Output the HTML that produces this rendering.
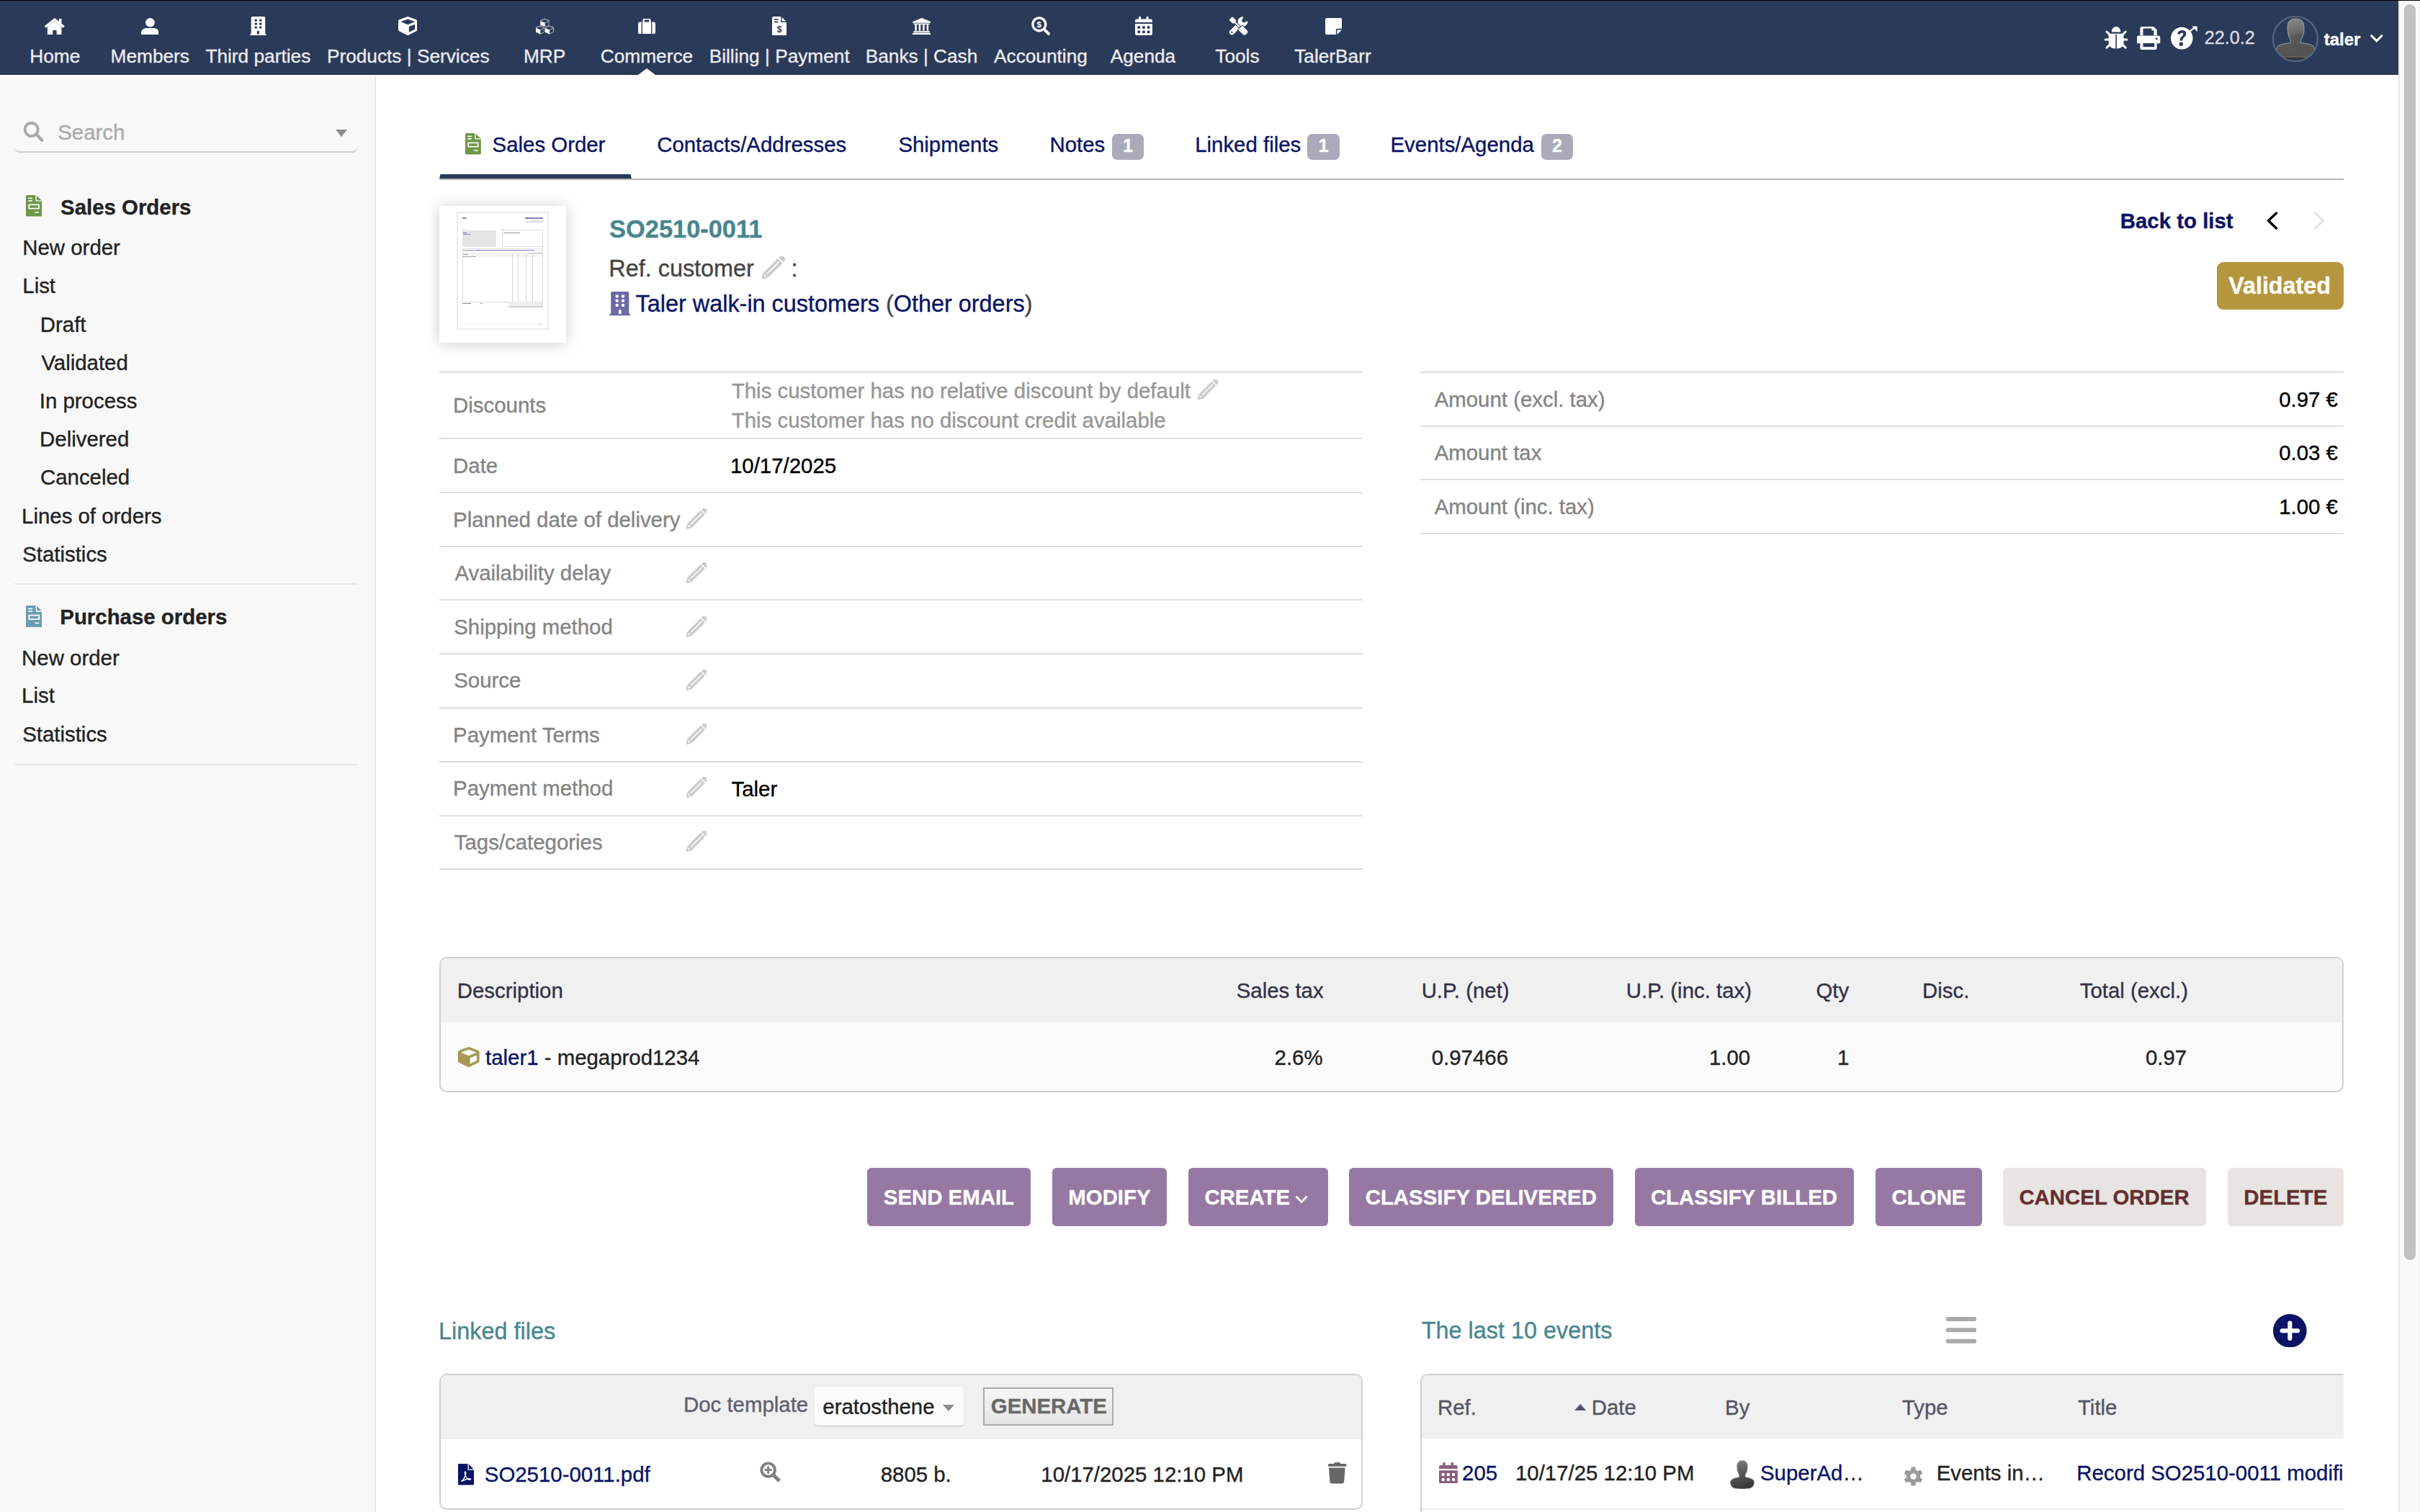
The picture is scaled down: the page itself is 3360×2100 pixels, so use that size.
<!DOCTYPE html>
<html><head><meta charset="utf-8"><title>SO2510-0011</title>
<style>
html,body{margin:0;padding:0;overflow:hidden;}
body{width:3360px;height:2100px;overflow:hidden;position:relative;background:#fff;font-family:"Liberation Sans",sans-serif;}
.t{position:absolute;white-space:nowrap;line-height:1;-webkit-text-stroke:0.35px currentColor;}
svg{display:block;}
</style></head><body>
<div style="position:absolute;left:0px;top:0px;width:3360px;height:1px;background:#000;"></div>
<div style="position:absolute;left:0px;top:1px;width:3330px;height:102px;background:#2b3a59;"></div>
<div style="position:absolute;left:0px;top:103px;width:3330px;height:1px;background:#1f2d4c;"></div>
<div class="t" style="top:65px;font-size:26.25px;color:#ececf0;left:41.3px;">Home</div>
<svg style="position:absolute;left:61.3px;top:24.6px;" width="29.2" height="23.7" viewBox="0 0 30 24" preserveAspectRatio="none"><path d="M1.8 12.6 L15.2 2.2 L28.6 12.6" fill="none" stroke="#fff" stroke-width="3.3" stroke-linejoin="miter"/><rect x="21.4" y="1" width="3.7" height="8" fill="#fff"/><path d="M5 12.2 L15.2 4.6 L25.1 12.2 V23.7 H18.1 V17.3 H12.6 V23.7 H5 Z" fill="#fff"/></svg>
<div class="t" style="top:65px;font-size:26.25px;color:#ececf0;left:153.6px;">Members</div>
<svg style="position:absolute;left:196.0px;top:24.6px;" width="24.4" height="23.7" viewBox="0 0 24 24" preserveAspectRatio="none"><circle cx="12.2" cy="6.4" r="6.3" fill="#fff"/><path d="M0 21.2 C0 16.8 3.6 14.2 7.6 14.2 H16.8 C20.8 14.2 24.4 16.8 24.4 21.2 V21.6 Q24.4 23.8 22.2 23.8 H2.2 Q0 23.8 0 21.6 Z" fill="#fff"/></svg>
<div class="t" style="top:65px;font-size:26.25px;color:#ececf0;left:285.4px;">Third parties</div>
<svg style="position:absolute;left:347.1px;top:23.0px;" width="22.9" height="26.4" viewBox="0 0 23 26.4" preserveAspectRatio="none"><path d="M0 26.4 V25.6 Q0 24.2 1.7 24 V1.6 Q1.7 0 3.3 0 H19.7 Q21.3 0 21.3 1.6 V24 Q22.9 24.2 22.9 25.6 V26.4 Z" fill="#fff"/><rect x="6.7" y="3.6" width="3.2" height="3.1" rx="0.9" fill="#2b3a59"/><rect x="6.7" y="8.55" width="3.2" height="3.1" rx="0.9" fill="#2b3a59"/><rect x="6.7" y="13.5" width="3.2" height="3.1" rx="0.9" fill="#2b3a59"/><rect x="13.2" y="3.6" width="3.2" height="3.1" rx="0.9" fill="#2b3a59"/><rect x="13.2" y="8.55" width="3.2" height="3.1" rx="0.9" fill="#2b3a59"/><rect x="13.2" y="13.5" width="3.2" height="3.1" rx="0.9" fill="#2b3a59"/><rect x="10.1" y="20" width="2.8" height="4.6" fill="#2b3a59"/></svg>
<div class="t" style="top:65px;font-size:26.25px;color:#ececf0;left:453.9px;">Products | Services</div>
<svg style="position:absolute;left:553.0px;top:23.0px;" width="26.4" height="26.2" viewBox="0 0 512 512" preserveAspectRatio="none"><path d="M239.1 6.3l-208 78c-18.7 7-31.1 24.9-31.1 44.9v225.1c0 18.2 10.3 34.8 26.5 42.9l208 104c13.5 6.8 29.4 6.8 42.9 0l208-104c16.3-8.1 26.5-24.8 26.5-42.9V129.3c0-20-12.4-37.9-31.1-44.9l-208-78C262 2.2 250 2.2 239.1 6.3zM256 68.4l192 72v1.1l-192 78-192-78v-1.1l192-72zm32 356V275.5l160-65v133.9l-160 80z" fill="#fff" fill-rule="evenodd"/></svg>
<div class="t" style="top:65px;font-size:26.25px;color:#ececf0;left:727.0px;">MRP</div>
<svg style="position:absolute;left:743.0px;top:25.0px;" width="26.7" height="23.0" viewBox="-0.5 -0.5 27.2 23.7" preserveAspectRatio="none"><g transform="translate(6.45 0.0) scale(0.02598)"><path d="M239.1 6.3l-208 78c-18.7 7-31.1 24.9-31.1 44.9v225.1c0 18.2 10.3 34.8 26.5 42.9l208 104c13.5 6.8 29.4 6.8 42.9 0l208-104c16.3-8.1 26.5-24.8 26.5-42.9V129.3c0-20-12.4-37.9-31.1-44.9l-208-78C262 2.2 250 2.2 239.1 6.3zM256 68.4l192 72v1.1l-192 78-192-78v-1.1l192-72zm32 356V275.5l160-65v133.9l-160 80z" fill="#fff" fill-rule="evenodd" stroke="#2b3a59" stroke-width="40"/></g><g transform="translate(0.0 10.0) scale(0.02598)"><path d="M239.1 6.3l-208 78c-18.7 7-31.1 24.9-31.1 44.9v225.1c0 18.2 10.3 34.8 26.5 42.9l208 104c13.5 6.8 29.4 6.8 42.9 0l208-104c16.3-8.1 26.5-24.8 26.5-42.9V129.3c0-20-12.4-37.9-31.1-44.9l-208-78C262 2.2 250 2.2 239.1 6.3zM256 68.4l192 72v1.1l-192 78-192-78v-1.1l192-72zm32 356V275.5l160-65v133.9l-160 80z" fill="#fff" fill-rule="evenodd" stroke="#2b3a59" stroke-width="40"/></g><g transform="translate(12.9 10.0) scale(0.02598)"><path d="M239.1 6.3l-208 78c-18.7 7-31.1 24.9-31.1 44.9v225.1c0 18.2 10.3 34.8 26.5 42.9l208 104c13.5 6.8 29.4 6.8 42.9 0l208-104c16.3-8.1 26.5-24.8 26.5-42.9V129.3c0-20-12.4-37.9-31.1-44.9l-208-78C262 2.2 250 2.2 239.1 6.3zM256 68.4l192 72v1.1l-192 78-192-78v-1.1l192-72zm32 356V275.5l160-65v133.9l-160 80z" fill="#fff" fill-rule="evenodd" stroke="#2b3a59" stroke-width="40"/></g></svg>
<div class="t" style="top:65px;font-size:26.25px;color:#ececf0;left:833.8px;">Commerce</div>
<svg style="position:absolute;left:886.0px;top:25.5px;" width="24.0" height="21.5" viewBox="0 0 24 22" preserveAspectRatio="none"><path d="M7.6 5 V2.2 Q7.6 0.4 9.4 0.4 H14.6 Q16.4 0.4 16.4 2.2 V5" fill="none" stroke="#fff" stroke-width="2.3"/><rect x="0" y="4.6" width="24" height="17.4" rx="3" fill="#fff"/><rect x="4.6" y="4.6" width="1.3" height="17.4" fill="#2b3a59"/><rect x="18.1" y="4.6" width="1.3" height="17.4" fill="#2b3a59"/></svg>
<div class="t" style="top:65px;font-size:26.25px;color:#ececf0;left:984.7px;">Billing | Payment</div>
<svg style="position:absolute;left:1072.0px;top:23.0px;" width="20.2" height="26.3" viewBox="0 0 20 26" preserveAspectRatio="none"><path d="M0 1.6 Q0 0 1.6 0 H12.6 L20 7.4 V24.4 Q20 26 18.4 26 H1.6 Q0 26 0 24.4 Z" fill="#fff"/><path d="M12.8 0 V7.2 H20" fill="none" stroke="#2b3a59" stroke-width="1.5"/><rect x="3" y="3.2" width="5.6" height="1.6" fill="#2b3a59"/><rect x="3" y="6.6" width="5.6" height="1.6" fill="#2b3a59"/><text x="10" y="22" font-family="Liberation Sans" font-weight="bold" font-size="12" text-anchor="middle" fill="#2b3a59">$</text></svg>
<div class="t" style="top:65px;font-size:26.25px;color:#ececf0;left:1201.7px;">Banks | Cash</div>
<svg style="position:absolute;left:1267.2px;top:25.0px;" width="25.2" height="23.0" viewBox="0 0 25 23.2" preserveAspectRatio="none"><path d="M12.5 0 L25 5.2 V6.8 H0 V5.2 Z" fill="#fff"/><rect x="1.5" y="7.6" width="22" height="1.6" fill="#fff"/><rect x="3.2" y="9.2" width="2.6" height="8.6" fill="#fff"/><rect x="8.6" y="9.2" width="2.6" height="8.6" fill="#fff"/><rect x="14.0" y="9.2" width="2.6" height="8.6" fill="#fff"/><rect x="19.4" y="9.2" width="2.6" height="8.6" fill="#fff"/><rect x="1.5" y="18.4" width="22" height="2" fill="#fff"/><rect x="0" y="21" width="25" height="2.2" fill="#fff"/></svg>
<div class="t" style="top:65px;font-size:26.25px;color:#ececf0;left:1380.0px;">Accounting</div>
<svg style="position:absolute;left:1432.3px;top:23.0px;" width="26.1" height="26.0" viewBox="0 0 26 26" preserveAspectRatio="none"><circle cx="10.8" cy="10.8" r="8.9" fill="none" stroke="#fff" stroke-width="3.4"/><path d="M17.6 17.6 L23.8 23.8" stroke="#fff" stroke-width="4" stroke-linecap="round"/><text x="10.8" y="15" font-family="Liberation Sans" font-weight="bold" font-size="11.5" text-anchor="middle" fill="#fff">$</text></svg>
<div class="t" style="top:65px;font-size:26.25px;color:#ececf0;left:1541.7px;">Agenda</div>
<svg style="position:absolute;left:1575.5px;top:23.0px;" width="24.0" height="26.0" viewBox="0 0 26 29.4" preserveAspectRatio="none"><rect x="5.4" y="0" width="3.4" height="5" rx="1" fill="#fff"/><rect x="16.8" y="0" width="3.4" height="5" rx="1" fill="#fff"/><path d="M0 6.4 Q0 3.9 2.5 3.9 H23.5 Q26 3.9 26 6.4 V9 H0 Z" fill="#fff"/><path d="M0 11.2 H26 V26.9 Q26 29.4 23.5 29.4 H2.5 Q0 29.4 0 26.9 Z" fill="#fff"/><rect x="3.70" y="14.90" width="4" height="4" rx="0.6" fill="#2b3a59"/><rect x="3.70" y="22.10" width="4" height="4" rx="0.6" fill="#2b3a59"/><rect x="10.95" y="14.90" width="4" height="4" rx="0.6" fill="#2b3a59"/><rect x="10.95" y="22.10" width="4" height="4" rx="0.6" fill="#2b3a59"/><rect x="18.20" y="14.90" width="4" height="4" rx="0.6" fill="#2b3a59"/><rect x="18.20" y="22.10" width="4" height="4" rx="0.6" fill="#2b3a59"/></svg>
<div class="t" style="top:65px;font-size:26.25px;color:#ececf0;left:1687.3px;">Tools</div>
<svg style="position:absolute;left:1706.3px;top:23.0px;" width="26.9" height="26.0" viewBox="0 0 26.8 26.3" preserveAspectRatio="none"><g transform="translate(13.4 13.15) rotate(-45) scale(0.87)"><path d="M-14.4 -4.2 H4 V4.2 H-14.4 A4.2 4.2 0 0 1 -14.4 -4.2 Z" fill="#fff"/><path d="M3 -4.4 A8 8 0 1 1 3 4.4 Z" fill="#fff"/><path d="M9.6 -2.9 L12 -2.9 L19 -6.5 V6.5 L12 2.9 H9.6 Z" fill="#2b3a59"/><circle cx="-14.6" cy="0" r="1.3" fill="#2b3a59"/></g><g transform="translate(13.4 13.15) rotate(45) scale(0.87)"><path d="M-18 -3 L-16.6 -4.4 H-8.6 L-7.4 -1.8 H3 V1.8 H-7.4 L-8.6 4.4 H-16.6 L-18 3 Z" fill="#fff" stroke="#2b3a59" stroke-width="1.1"/><path d="M3.4 -5.2 H14.6 A4.2 4.2 0 0 1 18.8 -1 V1 A4.2 4.2 0 0 1 14.6 5.2 H3.4 Z" fill="#fff" stroke="#2b3a59" stroke-width="1.1"/></g></svg>
<div class="t" style="top:65px;font-size:26.25px;color:#ececf0;left:1797.2px;">TalerBarr</div>
<svg style="position:absolute;left:1840.2px;top:25.0px;" width="23.1" height="23.0" viewBox="0 0 23 23" preserveAspectRatio="none"><path d="M0 2 Q0 0 2 0 H21 Q23 0 23 2 V14.8 H16.8 Q14.8 14.8 14.8 16.8 V23 H2 Q0 23 0 21 Z" fill="#fff"/><path d="M16.4 16.4 H23 L16.4 23 Z" fill="#fff"/></svg>
<svg style="position:absolute;left:886px;top:95px;" width="24" height="9" viewBox="0 0 24 9" preserveAspectRatio="none"><path d="M0 9 L12 0 L24 9 Z" fill="#fff"/></svg>
<svg style="position:absolute;left:2921.5px;top:37px;" width="32.2" height="32.2" viewBox="0 0 32 32" preserveAspectRatio="none"><path d="M9.6 7.5 Q10.2 0 16 0 Q21.8 0 22.4 7.5 Z" fill="#fff"/><path d="M5.6 9.6 H26.4 V22 Q26.4 29.8 16.8 30.4 V10.8 H15.2 V30.4 Q5.6 29.8 5.6 22 Z" fill="#fff"/><path d="M3 7 L8 12 M29 7 L24 12 M1 18 H7 M31 18 H25 M3 29 L8 24 M29 29 L24 24" stroke="#fff" stroke-width="3" stroke-linecap="round"/></svg>
<svg style="position:absolute;left:2967.3px;top:37px;" width="32.3" height="32.2" viewBox="0 0 32 32" preserveAspectRatio="none"><path d="M4.4 12 V2.4 Q4.4 0 6.8 0 H23 L27.4 4.4 V12 H23.2 V5.2 L20.2 5.2 V2.4 H8.4 V12 Z" fill="#fff"/><path d="M2.6 12.4 H29.4 Q32 12.4 32 15 V23.2 H27.4 V29.6 Q27.4 32 25 32 H6.8 Q4.4 32 4.4 29.6 V23.2 H0 V15 Q0 12.4 2.6 12.4 Z" fill="#fff"/><rect x="8.4" y="22.8" width="15.6" height="5.2" fill="#2b3a59"/><circle cx="27" cy="16.8" r="1.4" fill="#2b3a59"/></svg>
<svg style="position:absolute;left:3013.8px;top:36.4px;" width="37.2" height="32.6" viewBox="0 0 38 33" preserveAspectRatio="none"><circle cx="15.6" cy="17.4" r="15.6" fill="#fff"/><path d="M25 9 L34.5 1.8" stroke="#fff" stroke-width="2.2"/><path d="M29.8 0.6 H37.6 V8.2 Z" fill="#fff"/><g transform="translate(15.6 17.4) scale(1.16) translate(-15.6 -17.4)"><path d="M10 11.6 Q11.8 7.6 16 7.6 Q21 7.6 21 12 Q21 14.6 18.2 16.4 Q16.6 17.6 16.4 20.4 H13.2 Q13.2 16.8 15.6 15 Q17.4 13.8 17.4 12.3 Q17.4 10.8 15.8 10.8 Q14.2 10.8 13 12.8 Z" fill="#2b3a59"/><circle cx="14.8" cy="24.4" r="2.4" fill="#2b3a59"/></g></svg>
<div class="t" style="top:40px;font-size:25.2px;color:#dcdce2;left:3060.7px;">22.0.2</div>
<svg style="position:absolute;left:3155px;top:21.7px;" width="64" height="64.0" viewBox="0 0 64 64" preserveAspectRatio="none"><defs><linearGradient id="avg" x1="0" y1="0" x2="0.25" y2="1"><stop offset="0" stop-color="#8c8c8c"/><stop offset="0.45" stop-color="#6c6c6c"/><stop offset="0.55" stop-color="#585858"/><stop offset="1" stop-color="#535353"/></linearGradient><clipPath id="avc"><circle cx="32" cy="32" r="30.6"/></clipPath></defs><g clip-path="url(#avc)"><path d="M21 15.5 Q21 4 32.5 4 Q44 4 44 15.5 V21.5 Q43.4 28.5 39.6 33.5 V37.4 Q54 39.2 57 42.4 Q59.6 45.4 59.6 57.4 H5 Q5 45.4 7.6 42.4 Q10.6 39.2 25.4 37.4 V33.5 Q21.6 28.5 21.4 21.5 Z" fill="url(#avg)" stroke="#a8a8a8" stroke-width="1"/><rect x="5" y="57.4" width="55" height="2.6" fill="#333"/></g><circle cx="32" cy="32" r="31" fill="none" stroke="#56657f" stroke-width="2.2"/></svg>
<div class="t" style="top:43px;font-size:24px;color:#fff;font-weight:bold;left:3226.7px;">taler</div>
<svg style="position:absolute;left:3289.5px;top:47px;" width="19.5" height="14" viewBox="0 0 19.5 14" preserveAspectRatio="none"><path d="M1.8 1.8 L9.75 9.9 L17.7 1.8" fill="none" stroke="#fff" stroke-width="3"/></svg>
<div style="position:absolute;left:3330px;top:1px;width:30px;height:2099px;background:#fafafa;"></div>
<div style="position:absolute;left:3330px;top:1px;width:1.5px;height:2099px;background:#e8e8e8;"></div>
<div style="position:absolute;left:3338px;top:6px;width:16px;height:1744px;background:#c1c1c1;border-radius:8px;"></div>
<div style="position:absolute;left:3358.6px;top:1px;width:1.4px;height:2099px;background:#efefef;"></div>
<div style="position:absolute;left:0px;top:105px;width:520px;height:1995px;background:#f8f8f8;"></div>
<div style="position:absolute;left:520px;top:105px;width:2px;height:1995px;background:#e6e6e6;"></div>
<svg style="position:absolute;left:32.3px;top:168.4px;" width="28.7" height="29.1" viewBox="0 0 30 30" preserveAspectRatio="none"><circle cx="12.2" cy="12.2" r="9.4" fill="none" stroke="#aaa" stroke-width="4"/><path d="M19.6 19.6 L27.4 27.4" stroke="#aaa" stroke-width="4.6" stroke-linecap="round"/></svg>
<div class="t" style="top:169px;font-size:29.4px;color:#aaa;left:80.2px;">Search</div>
<svg style="position:absolute;left:466px;top:180px;" width="16" height="10" viewBox="0 0 16 10" preserveAspectRatio="none"><path d="M0 0 H16 L8 10 Z" fill="#8c8c8c"/></svg>
<div style="position:absolute;left:20px;top:150px;width:476px;height:62px;border-bottom:2px solid #cecece;border-radius:0 0 7px 7px;box-sizing:border-box;"></div>
<svg style="position:absolute;left:35.9px;top:271.3px;" width="22.2" height="29.4" viewBox="0 0 22 30" preserveAspectRatio="none"><path d="M0 1.4 Q0 0 1.4 0 H14 L22 8 V28.6 Q22 30 20.6 30 H1.4 Q0 30 0 28.6 Z" fill="#6f9649"/><path d="M14 0 V8 H22" fill="none" stroke="#fff" stroke-width="1.4"/><rect x="3" y="3.6" width="6" height="1.6" fill="#fff"/><rect x="3" y="7.2" width="6" height="1.6" fill="#fff"/><rect x="4.2" y="13.6" width="13.6" height="5.4" fill="none" stroke="#fff" stroke-width="1.7"/><rect x="12.2" y="23.6" width="5.6" height="1.6" fill="#fff"/></svg>
<div class="t" style="top:273px;font-size:29.4px;color:#222;font-weight:bold;left:84.1px;">Sales Orders</div>
<div class="t" style="top:329px;font-size:29.4px;color:#222;left:31.3px;">New order</div>
<div class="t" style="top:382px;font-size:29.4px;color:#222;left:31.3px;">List</div>
<div class="t" style="top:436px;font-size:29.4px;color:#222;left:55.8px;">Draft</div>
<div class="t" style="top:489px;font-size:29.4px;color:#222;left:57.4px;">Validated</div>
<div class="t" style="top:542px;font-size:29.4px;color:#222;left:54.8px;">In process</div>
<div class="t" style="top:595px;font-size:29.4px;color:#222;left:55.1px;">Delivered</div>
<div class="t" style="top:648px;font-size:29.4px;color:#222;left:56.0px;">Canceled</div>
<div class="t" style="top:702px;font-size:29.4px;color:#222;left:30.1px;">Lines of orders</div>
<div class="t" style="top:755px;font-size:29.4px;color:#222;left:31.2px;">Statistics</div>
<div style="position:absolute;left:20px;top:810px;width:476px;height:2px;background:#e8e8e8;"></div>
<svg style="position:absolute;left:35.7px;top:841px;" width="22.6" height="30" viewBox="0 0 22 30" preserveAspectRatio="none"><path d="M0 1.4 Q0 0 1.4 0 H14 L22 8 V28.6 Q22 30 20.6 30 H1.4 Q0 30 0 28.6 Z" fill="#6d9db0"/><path d="M14 0 V8 H22" fill="none" stroke="#fff" stroke-width="1.4"/><rect x="3" y="3.6" width="6" height="1.6" fill="#fff"/><rect x="3" y="7.2" width="6" height="1.6" fill="#fff"/><rect x="4.2" y="13.6" width="13.6" height="5.4" fill="none" stroke="#fff" stroke-width="1.7"/><rect x="12.2" y="23.6" width="5.6" height="1.6" fill="#fff"/></svg>
<div class="t" style="top:842px;font-size:29.4px;color:#222;font-weight:bold;left:83.3px;">Purchase orders</div>
<div class="t" style="top:899px;font-size:29.4px;color:#222;left:30.1px;">New order</div>
<div class="t" style="top:951px;font-size:29.4px;color:#222;left:30.1px;">List</div>
<div class="t" style="top:1005px;font-size:29.4px;color:#222;left:31.2px;">Statistics</div>
<div style="position:absolute;left:20px;top:1061px;width:476px;height:2px;background:#e8e8e8;"></div>
<svg style="position:absolute;left:646.1px;top:185.1px;" width="21.8" height="29.5" viewBox="0 0 22 30" preserveAspectRatio="none"><path d="M0 1.4 Q0 0 1.4 0 H14 L22 8 V28.6 Q22 30 20.6 30 H1.4 Q0 30 0 28.6 Z" fill="#6f9649"/><path d="M14 0 V8 H22" fill="none" stroke="#fff" stroke-width="1.4"/><rect x="3" y="3.6" width="6" height="1.6" fill="#fff"/><rect x="3" y="7.2" width="6" height="1.6" fill="#fff"/><rect x="4.2" y="13.6" width="13.6" height="5.4" fill="none" stroke="#fff" stroke-width="1.7"/><rect x="12.2" y="23.6" width="5.6" height="1.6" fill="#fff"/></svg>
<div class="t" style="top:186px;font-size:29.4px;color:#0a1464;left:683.6px;">Sales Order</div>
<div class="t" style="top:186px;font-size:29.4px;color:#0a1464;left:912.2px;">Contacts/Addresses</div>
<div class="t" style="top:186px;font-size:29.4px;color:#0a1464;left:1247.4px;">Shipments</div>
<div class="t" style="top:186px;font-size:29.4px;color:#0a1464;left:1457.5px;">Notes</div>
<div class="t" style="top:186px;font-size:29.4px;color:#0a1464;left:1659.2px;">Linked files</div>
<div class="t" style="top:186px;font-size:29.4px;color:#0a1464;left:1930.5px;">Events/Agenda</div>
<div style="position:absolute;left:1544.3px;top:186px;width:43.4px;height:35.6px;background:#aaaaba;border-radius:7px;"></div>
<div class="t" style="top:190px;font-size:25.2px;color:#fff;font-weight:bold;left:1559.0px;">1</div>
<div style="position:absolute;left:1815.2px;top:186px;width:44.5px;height:35.6px;background:#aaaaba;border-radius:7px;"></div>
<div class="t" style="top:190px;font-size:25.2px;color:#fff;font-weight:bold;left:1830.4px;">1</div>
<div style="position:absolute;left:2140.3px;top:186px;width:43.4px;height:35.6px;background:#aaaaba;border-radius:7px;"></div>
<div class="t" style="top:190px;font-size:25.2px;color:#fff;font-weight:bold;left:2155.0px;">2</div>
<svg style="position:absolute;left:610px;top:241.5px;" width="267" height="6.5" viewBox="0 0 267 6.5" preserveAspectRatio="none"><path d="M1.5 0 H265.5 L267 6.5 H0 Z" fill="#2b3a59"/></svg>
<div style="position:absolute;left:610px;top:248px;width:2644px;height:2px;background:#b4b4b4;"></div>
<div style="position:absolute;left:610px;top:286px;width:176px;height:190px;background:#fff;box-shadow:0 1px 20px rgba(0,0,0,0.2);"></div>
<div style="position:absolute;left:634px;top:294px;width:128px;height:164px;background:#fff;border:2px solid #ebebeb;box-sizing:border-box;"></div>
<div style="position:absolute;left:642px;top:302.4px;width:6px;height:1.8px;background:#8c8cba;"></div>
<div style="position:absolute;left:729px;top:302.4px;width:25px;height:1.8px;background:#8080b0;"></div>
<div style="position:absolute;left:736px;top:306px;width:18px;height:1px;background:#d0d0dc;"></div>
<div style="position:absolute;left:730px;top:308.2px;width:24px;height:1.2px;background:#c4c4d4;"></div>
<div style="position:absolute;left:642px;top:317.6px;width:4px;height:0.8px;background:#ccc;"></div>
<div style="position:absolute;left:697px;top:317.6px;width:3px;height:0.8px;background:#ccc;"></div>
<div style="position:absolute;left:642px;top:320px;width:47px;height:23px;background:#e4e4e4;"></div>
<div style="position:absolute;left:643.4px;top:322.8px;width:4.6px;height:1.0px;background:#777799;"></div>
<div style="position:absolute;left:643.4px;top:325px;width:9.6px;height:1px;background:#8888aa;"></div>
<div style="position:absolute;left:697px;top:319.3px;width:57.4px;height:24.1px;border:1px solid #dedede;box-sizing:border-box;"></div>
<div style="position:absolute;left:699px;top:322.8px;width:23px;height:1.0px;background:#999;"></div>
<div style="position:absolute;left:642px;top:345.4px;width:112.4px;height:3.6px;border:1px solid #e0e0e0;box-sizing:border-box;"></div>
<div style="position:absolute;left:643px;top:347px;width:16px;height:1px;background:#aaa;"></div>
<div style="position:absolute;left:660px;top:346.8px;width:82px;height:1.2px;background:#8e8ee6;"></div>
<div style="position:absolute;left:734px;top:350.6px;width:20px;height:0.8px;background:#bbb;"></div>
<div style="position:absolute;left:642px;top:352px;width:112.4px;height:68.4px;border:1px solid #dcdcdc;box-sizing:border-box;"></div>
<div style="position:absolute;left:642px;top:354.8px;width:112.4px;height:0.8px;background:#e2e2e2;"></div>
<div style="position:absolute;left:643px;top:352.8px;width:7px;height:0.8px;background:#aaa;"></div>
<div style="position:absolute;left:643px;top:356.2px;width:18px;height:1.0px;background:#b0b0b0;"></div>
<div style="position:absolute;left:710.5px;top:352px;width:0.8px;height:68.4px;background:#d8d8d8;"></div>
<div style="position:absolute;left:719.3px;top:352px;width:0.8px;height:68.4px;background:#d8d8d8;"></div>
<div style="position:absolute;left:730.3px;top:352px;width:0.8px;height:68.4px;background:#d8d8d8;"></div>
<div style="position:absolute;left:739.4px;top:352px;width:0.8px;height:68.4px;background:#d8d8d8;"></div>
<div style="position:absolute;left:642px;top:420.8px;width:12px;height:1.2px;background:#888;"></div>
<div style="position:absolute;left:666px;top:420.8px;width:4px;height:1.2px;background:#aaa;"></div>
<div style="position:absolute;left:705.6px;top:420.8px;width:48.4px;height:1.4px;background:#ddd;"></div>
<div style="position:absolute;left:705.6px;top:423px;width:48.4px;height:1.4px;background:#d6d6d6;"></div>
<div style="position:absolute;left:705.6px;top:425.2px;width:48.4px;height:1.8px;background:#cdcdcd;"></div>
<div style="position:absolute;left:642px;top:450px;width:112px;height:0.8px;background:#f0f0f0;"></div>
<div style="position:absolute;left:748px;top:449.6px;width:3px;height:1.4px;background:#bbb;"></div>
<div class="t" style="top:301px;font-size:34.4px;color:#48868e;font-weight:bold;left:846.1px;">SO2510-0011</div>
<div class="t" style="top:357px;font-size:32.4px;color:#444;left:845.3px;">Ref. customer</div>
<svg style="position:absolute;left:1057.2px;top:355.7px;" width="32.5" height="32.2" viewBox="0 0 32 32" preserveAspectRatio="none"><g transform="translate(1.2 30.8) rotate(-45)"><path d="M0.6 -1.6 L7.2 -4.6 H34.6 V4.6 H7.2 L0.6 1.6 Q-0.6 0 0.6 -1.6 Z" fill="#ccc"/><path d="M36.4 -4.6 H39.6 Q42.2 -4.6 42.2 -2 V2 Q42.2 4.6 39.6 4.6 H36.4 Z" fill="#ccc"/><rect x="9.4" y="-0.9" width="23.6" height="1.6" fill="#fff"/><path d="M3.2 0 L6.6 -1.8 V1.8 Z" fill="#fff"/></g></svg>
<div class="t" style="top:357px;font-size:32.4px;color:#444;left:1098.5px;">:</div>
<svg style="position:absolute;left:845.5px;top:405.3px;" width="29.5" height="33.3" viewBox="0 0 23 26.4" preserveAspectRatio="none"><path d="M0 26.4 V25.6 Q0 24.2 1.7 24 V1.6 Q1.7 0 3.3 0 H19.7 Q21.3 0 21.3 1.6 V24 Q22.9 24.2 22.9 25.6 V26.4 Z" fill="#6c6aa5"/><rect x="6.7" y="3.6" width="3.2" height="3.1" rx="0.9" fill="#fff"/><rect x="6.7" y="8.55" width="3.2" height="3.1" rx="0.9" fill="#fff"/><rect x="6.7" y="13.5" width="3.2" height="3.1" rx="0.9" fill="#fff"/><rect x="13.2" y="3.6" width="3.2" height="3.1" rx="0.9" fill="#fff"/><rect x="13.2" y="8.55" width="3.2" height="3.1" rx="0.9" fill="#fff"/><rect x="13.2" y="13.5" width="3.2" height="3.1" rx="0.9" fill="#fff"/><rect x="10.1" y="20" width="2.8" height="4.6" fill="#fff"/></svg>
<div class="t" style="top:406px;font-size:32.4px;color:#0a1464;left:882.6px;">Taler walk-in customers <span style="color:#444">(</span>Other orders<span style="color:#444">)</span></div>
<div class="t" style="top:292px;font-size:29.4px;color:#0a1464;font-weight:bold;left:2943.8px;">Back to list</div>
<svg style="position:absolute;left:3146px;top:293.5px;" width="17" height="25.0" viewBox="0 0 17 25" preserveAspectRatio="none"><path d="M14.5 2 L3.5 12.5 L14.5 23" fill="none" stroke="#000" stroke-width="3.4" stroke-linecap="round" stroke-linejoin="round"/></svg>
<svg style="position:absolute;left:3212px;top:293.5px;" width="17" height="25.0" viewBox="0 0 17 25" preserveAspectRatio="none"><path d="M2.5 2 L13.5 12.5 L2.5 23" fill="none" stroke="#e6e6e6" stroke-width="3.4" stroke-linecap="round" stroke-linejoin="round"/></svg>
<div style="position:absolute;left:3078px;top:364px;width:176px;height:66px;background:#b5963e;border-radius:9px;"></div>
<div class="t" style="top:381px;font-size:32.3px;color:#fff;font-weight:bold;left:3094.2px;">Validated</div>
<div style="position:absolute;left:610px;top:516px;width:1282px;height:2px;background:#dedede;"></div>
<div style="position:absolute;left:610px;top:608px;width:1282px;height:2px;background:#dedede;"></div>
<div style="position:absolute;left:610px;top:683px;width:1282px;height:2px;background:#dedede;"></div>
<div style="position:absolute;left:610px;top:758px;width:1282px;height:2px;background:#dedede;"></div>
<div style="position:absolute;left:610px;top:832px;width:1282px;height:2px;background:#dedede;"></div>
<div style="position:absolute;left:610px;top:907px;width:1282px;height:2px;background:#dedede;"></div>
<div style="position:absolute;left:610px;top:982px;width:1282px;height:2px;background:#dedede;"></div>
<div style="position:absolute;left:610px;top:1057px;width:1282px;height:2px;background:#dedede;"></div>
<div style="position:absolute;left:610px;top:1132px;width:1282px;height:2px;background:#dedede;"></div>
<div style="position:absolute;left:610px;top:1206px;width:1282px;height:2px;background:#dedede;"></div>
<div class="t" style="top:548px;font-size:29.4px;color:#848484;left:629.1px;">Discounts</div>
<div class="t" style="top:632px;font-size:29.4px;color:#848484;left:629.1px;">Date</div>
<div class="t" style="top:707px;font-size:29.4px;color:#848484;left:629.1px;">Planned date of delivery</div>
<div class="t" style="top:781px;font-size:29.4px;color:#848484;left:631.4px;">Availability delay</div>
<div class="t" style="top:856px;font-size:29.4px;color:#848484;left:630.2px;">Shipping method</div>
<div class="t" style="top:930px;font-size:29.4px;color:#848484;left:630.2px;">Source</div>
<div class="t" style="top:1006px;font-size:29.4px;color:#848484;left:629.1px;">Payment Terms</div>
<div class="t" style="top:1080px;font-size:29.4px;color:#848484;left:629.1px;">Payment method</div>
<div class="t" style="top:1155px;font-size:29.4px;color:#848484;left:630.8px;">Tags/categories</div>
<svg style="position:absolute;left:951.9px;top:706.3px;" width="29.6" height="29.6" viewBox="0 0 32 32" preserveAspectRatio="none"><g transform="translate(1.2 30.8) rotate(-45)"><path d="M0.6 -1.6 L7.2 -4.6 H34.6 V4.6 H7.2 L0.6 1.6 Q-0.6 0 0.6 -1.6 Z" fill="#ccc"/><path d="M36.4 -4.6 H39.6 Q42.2 -4.6 42.2 -2 V2 Q42.2 4.6 39.6 4.6 H36.4 Z" fill="#ccc"/><rect x="9.4" y="-0.9" width="23.6" height="1.6" fill="#fff"/><path d="M3.2 0 L6.6 -1.8 V1.8 Z" fill="#fff"/></g></svg>
<svg style="position:absolute;left:951.9px;top:780.9px;" width="29.6" height="29.6" viewBox="0 0 32 32" preserveAspectRatio="none"><g transform="translate(1.2 30.8) rotate(-45)"><path d="M0.6 -1.6 L7.2 -4.6 H34.6 V4.6 H7.2 L0.6 1.6 Q-0.6 0 0.6 -1.6 Z" fill="#ccc"/><path d="M36.4 -4.6 H39.6 Q42.2 -4.6 42.2 -2 V2 Q42.2 4.6 39.6 4.6 H36.4 Z" fill="#ccc"/><rect x="9.4" y="-0.9" width="23.6" height="1.6" fill="#fff"/><path d="M3.2 0 L6.6 -1.8 V1.8 Z" fill="#fff"/></g></svg>
<svg style="position:absolute;left:951.9px;top:855.5px;" width="29.6" height="29.6" viewBox="0 0 32 32" preserveAspectRatio="none"><g transform="translate(1.2 30.8) rotate(-45)"><path d="M0.6 -1.6 L7.2 -4.6 H34.6 V4.6 H7.2 L0.6 1.6 Q-0.6 0 0.6 -1.6 Z" fill="#ccc"/><path d="M36.4 -4.6 H39.6 Q42.2 -4.6 42.2 -2 V2 Q42.2 4.6 39.6 4.6 H36.4 Z" fill="#ccc"/><rect x="9.4" y="-0.9" width="23.6" height="1.6" fill="#fff"/><path d="M3.2 0 L6.6 -1.8 V1.8 Z" fill="#fff"/></g></svg>
<svg style="position:absolute;left:951.9px;top:930.0999999999999px;" width="29.6" height="29.6" viewBox="0 0 32 32" preserveAspectRatio="none"><g transform="translate(1.2 30.8) rotate(-45)"><path d="M0.6 -1.6 L7.2 -4.6 H34.6 V4.6 H7.2 L0.6 1.6 Q-0.6 0 0.6 -1.6 Z" fill="#ccc"/><path d="M36.4 -4.6 H39.6 Q42.2 -4.6 42.2 -2 V2 Q42.2 4.6 39.6 4.6 H36.4 Z" fill="#ccc"/><rect x="9.4" y="-0.9" width="23.6" height="1.6" fill="#fff"/><path d="M3.2 0 L6.6 -1.8 V1.8 Z" fill="#fff"/></g></svg>
<svg style="position:absolute;left:951.9px;top:1004.6999999999999px;" width="29.6" height="29.6" viewBox="0 0 32 32" preserveAspectRatio="none"><g transform="translate(1.2 30.8) rotate(-45)"><path d="M0.6 -1.6 L7.2 -4.6 H34.6 V4.6 H7.2 L0.6 1.6 Q-0.6 0 0.6 -1.6 Z" fill="#ccc"/><path d="M36.4 -4.6 H39.6 Q42.2 -4.6 42.2 -2 V2 Q42.2 4.6 39.6 4.6 H36.4 Z" fill="#ccc"/><rect x="9.4" y="-0.9" width="23.6" height="1.6" fill="#fff"/><path d="M3.2 0 L6.6 -1.8 V1.8 Z" fill="#fff"/></g></svg>
<svg style="position:absolute;left:951.9px;top:1079.3px;" width="29.6" height="29.6" viewBox="0 0 32 32" preserveAspectRatio="none"><g transform="translate(1.2 30.8) rotate(-45)"><path d="M0.6 -1.6 L7.2 -4.6 H34.6 V4.6 H7.2 L0.6 1.6 Q-0.6 0 0.6 -1.6 Z" fill="#ccc"/><path d="M36.4 -4.6 H39.6 Q42.2 -4.6 42.2 -2 V2 Q42.2 4.6 39.6 4.6 H36.4 Z" fill="#ccc"/><rect x="9.4" y="-0.9" width="23.6" height="1.6" fill="#fff"/><path d="M3.2 0 L6.6 -1.8 V1.8 Z" fill="#fff"/></g></svg>
<svg style="position:absolute;left:951.9px;top:1153.8999999999999px;" width="29.6" height="29.6" viewBox="0 0 32 32" preserveAspectRatio="none"><g transform="translate(1.2 30.8) rotate(-45)"><path d="M0.6 -1.6 L7.2 -4.6 H34.6 V4.6 H7.2 L0.6 1.6 Q-0.6 0 0.6 -1.6 Z" fill="#ccc"/><path d="M36.4 -4.6 H39.6 Q42.2 -4.6 42.2 -2 V2 Q42.2 4.6 39.6 4.6 H36.4 Z" fill="#ccc"/><rect x="9.4" y="-0.9" width="23.6" height="1.6" fill="#fff"/><path d="M3.2 0 L6.6 -1.8 V1.8 Z" fill="#fff"/></g></svg>
<div class="t" style="top:528px;font-size:29.4px;color:#969696;left:1015.8px;">This customer has no relative discount by default</div>
<div class="t" style="top:569px;font-size:29.4px;color:#969696;left:1015.8px;">This customer has no discount credit available</div>
<svg style="position:absolute;left:1662.4px;top:527.2px;" width="29.0" height="29.0" viewBox="0 0 32 32" preserveAspectRatio="none"><g transform="translate(1.2 30.8) rotate(-45)"><path d="M0.6 -1.6 L7.2 -4.6 H34.6 V4.6 H7.2 L0.6 1.6 Q-0.6 0 0.6 -1.6 Z" fill="#ccc"/><path d="M36.4 -4.6 H39.6 Q42.2 -4.6 42.2 -2 V2 Q42.2 4.6 39.6 4.6 H36.4 Z" fill="#ccc"/><rect x="9.4" y="-0.9" width="23.6" height="1.6" fill="#fff"/><path d="M3.2 0 L6.6 -1.8 V1.8 Z" fill="#fff"/></g></svg>
<div class="t" style="top:632px;font-size:29.4px;color:#000;left:1014.0px;">10/17/2025</div>
<div class="t" style="top:1081px;font-size:29.4px;color:#000;left:1015.5px;">Taler</div>
<div style="position:absolute;left:1972px;top:516px;width:1282px;height:2px;background:#dedede;"></div>
<div style="position:absolute;left:1972px;top:591px;width:1282px;height:2px;background:#dedede;"></div>
<div style="position:absolute;left:1972px;top:665px;width:1282px;height:2px;background:#dedede;"></div>
<div style="position:absolute;left:1972px;top:740px;width:1282px;height:2px;background:#dedede;"></div>
<div class="t" style="top:540px;font-size:29.4px;color:#848484;left:1991.7px;">Amount (excl. tax)</div>
<div class="t" style="top:540px;font-size:29.4px;color:#000;right:114.1px;">0.97 €</div>
<div class="t" style="top:614px;font-size:29.4px;color:#848484;left:1991.7px;">Amount tax</div>
<div class="t" style="top:614px;font-size:29.4px;color:#000;right:114.1px;">0.03 €</div>
<div class="t" style="top:689px;font-size:29.4px;color:#848484;left:1991.7px;">Amount (inc. tax)</div>
<div class="t" style="top:689px;font-size:29.4px;color:#000;right:114.1px;">1.00 €</div>
<div style="position:absolute;left:610px;top:1329px;width:2644px;height:188px;border:2px solid #d0d0d0;border-radius:10px;box-sizing:border-box;background:#fbfbfb;overflow:hidden;"></div>
<div style="position:absolute;left:612px;top:1331px;width:2640px;height:89px;background:#f0f0f0;border-radius:8px 8px 0 0;"></div>
<div class="t" style="top:1361px;font-size:29.4px;color:#323246;left:634.8px;">Description</div>
<div class="t" style="top:1361px;font-size:29.4px;color:#323246;right:1522.4px;">Sales tax</div>
<div class="t" style="top:1361px;font-size:29.4px;color:#323246;right:1264.4px;">U.P. (net)</div>
<div class="t" style="top:1361px;font-size:29.4px;color:#323246;right:928.0px;">U.P. (inc. tax)</div>
<div class="t" style="top:1361px;font-size:29.4px;color:#323246;right:792.9px;">Qty</div>
<div class="t" style="top:1361px;font-size:29.4px;color:#323246;left:2669.0px;">Disc.</div>
<div class="t" style="top:1361px;font-size:29.4px;color:#323246;right:322.0px;">Total (excl.)</div>
<svg style="position:absolute;left:636px;top:1453.5px;" width="29.6" height="28.4" viewBox="0 0 512 512" preserveAspectRatio="none"><path d="M239.1 6.3l-208 78c-18.7 7-31.1 24.9-31.1 44.9v225.1c0 18.2 10.3 34.8 26.5 42.9l208 104c13.5 6.8 29.4 6.8 42.9 0l208-104c16.3-8.1 26.5-24.8 26.5-42.9V129.3c0-20-12.4-37.9-31.1-44.9l-208-78C262 2.2 250 2.2 239.1 6.3zM256 68.4l192 72v1.1l-192 78-192-78v-1.1l192-72zm32 356V275.5l160-65v133.9l-160 80z" fill="#a69a54" fill-rule="evenodd"/></svg>
<div class="t" style="top:1454px;font-size:29.4px;color:#222;left:674.0px;"><span style="color:#0a1464">taler1</span> - megaprod1234</div>
<div class="t" style="top:1454px;font-size:29.4px;color:#222;right:1523.4px;">2.6%</div>
<div class="t" style="top:1454px;font-size:29.4px;color:#222;right:1266.0px;">0.97466</div>
<div class="t" style="top:1454px;font-size:29.4px;color:#222;right:929.9px;">1.00</div>
<div class="t" style="top:1454px;font-size:29.4px;color:#222;right:792.6px;">1</div>
<div class="t" style="top:1454px;font-size:29.4px;color:#222;right:323.9px;">0.97</div>
<div style="position:absolute;left:1204.1px;top:1622px;width:226.8px;height:81px;background:#9679a3;border-radius:6px;"></div>
<div class="t" style="top:1648px;font-size:29.4px;color:#fff;font-weight:bold;left:1226.8px;">SEND EMAIL</div>
<div style="position:absolute;left:1460.9px;top:1622px;width:159.1px;height:81px;background:#9679a3;border-radius:6px;"></div>
<div class="t" style="top:1648px;font-size:29.4px;color:#fff;font-weight:bold;left:1483.3px;">MODIFY</div>
<div style="position:absolute;left:1650px;top:1622px;width:193.6px;height:81px;background:#9679a3;border-radius:6px;"></div>
<div class="t" style="top:1648px;font-size:29.4px;color:#fff;font-weight:bold;left:1672.4px;">CREATE</div>
<svg style="position:absolute;left:1797.5px;top:1659.5px;" width="18.0" height="12.0" viewBox="0 0 18 12" preserveAspectRatio="none"><path d="M1.6 1.6 L9 9.4 L16.4 1.6" fill="none" stroke="#fff" stroke-width="2.8"/></svg>
<div style="position:absolute;left:1873.2px;top:1622px;width:366.8px;height:81px;background:#9679a3;border-radius:6px;"></div>
<div class="t" style="top:1648px;font-size:29.4px;color:#fff;font-weight:bold;left:1895.7px;">CLASSIFY DELIVERED</div>
<div style="position:absolute;left:2270px;top:1622px;width:303.6px;height:81px;background:#9679a3;border-radius:6px;"></div>
<div class="t" style="top:1648px;font-size:29.4px;color:#fff;font-weight:bold;left:2291.9px;">CLASSIFY BILLED</div>
<div style="position:absolute;left:2604px;top:1622px;width:148px;height:81px;background:#9679a3;border-radius:6px;"></div>
<div class="t" style="top:1648px;font-size:29.4px;color:#fff;font-weight:bold;left:2626.6px;">CLONE</div>
<div style="position:absolute;left:2781px;top:1622px;width:281.6px;height:81px;background:#e8e4e1;border-radius:6px;"></div>
<div class="t" style="top:1648px;font-size:29.4px;color:#633030;font-weight:bold;left:2803.4px;">CANCEL ORDER</div>
<div style="position:absolute;left:3093px;top:1622px;width:160.5px;height:81px;background:#e8e4e1;border-radius:6px;"></div>
<div class="t" style="top:1648px;font-size:29.4px;color:#633030;font-weight:bold;left:3115.3px;">DELETE</div>
<div class="t" style="top:1833px;font-size:32.4px;color:#48868e;left:609.1px;">Linked files</div>
<div style="position:absolute;left:610px;top:1908px;width:1282px;height:189px;border:2px solid #d0d0d0;border-radius:10px;box-sizing:border-box;background:#fff;"></div>
<div style="position:absolute;left:612px;top:1910px;width:1278px;height:89px;background:#f0f0f0;border-radius:8px 8px 0 0;"></div>
<div class="t" style="top:1936px;font-size:29.4px;color:#5e5e6e;left:949.0px;">Doc template</div>
<div style="position:absolute;left:1130.6px;top:1926px;width:207.9px;height:54px;background:#fbfbfb;border-radius:5px;box-shadow:0 1.5px 0 #cfcfcf;"></div>
<div class="t" style="top:1939px;font-size:29.4px;color:#222;left:1142.3px;">eratosthene</div>
<svg style="position:absolute;left:1309px;top:1951px;" width="16" height="9" viewBox="0 0 16 9" preserveAspectRatio="none"><path d="M0 0 H16 L8 9 Z" fill="#8c8c8c"/></svg>
<div style="position:absolute;left:1365.3px;top:1927.3px;width:181.0px;height:52.7px;border:2px solid #a8a8a8;box-sizing:border-box;background:linear-gradient(#f6f6f6,#e4e4e4);"></div>
<div class="t" style="top:1938px;font-size:29.4px;color:#686868;font-weight:bold;left:1375.8px;">GENERATE</div>
<svg style="position:absolute;left:636px;top:2033px;" width="22" height="29.6" viewBox="0 0 24 31" preserveAspectRatio="none"><path d="M0 1.4 Q0 0 1.4 0 H15.5 L24 8.5 V29.6 Q24 31 22.6 31 H1.4 Q0 31 0 29.6 Z" fill="#0a1464"/><path d="M15.5 0 V8.5 H24" fill="none" stroke="#fff" stroke-width="1.4"/><path d="M5 25.8 Q8.6 23.2 11 17.2 Q12.4 12.2 11.2 11.6 Q9.8 11.4 10.6 15.6 Q12 20.6 15.4 22.8 Q19.4 23.6 19 22.4 Q18.2 21.2 13.2 22.4 Q7.6 24.4 5 25.8 Z" fill="none" stroke="#fff" stroke-width="1.5"/></svg>
<div class="t" style="top:2033px;font-size:29.4px;color:#0a1464;left:672.8px;">SO2510-0011.pdf</div>
<svg style="position:absolute;left:1055.4px;top:2030px;" width="29.6" height="29.4" viewBox="0 0 30 30" preserveAspectRatio="none"><circle cx="11.8" cy="11.8" r="9.4" fill="none" stroke="#7f7f7f" stroke-width="4"/><path d="M19.2 19.2 L27.6 27.6" stroke="#7f7f7f" stroke-width="5.2" stroke-linecap="butt"/><path d="M6.6 11.8 H17 M11.8 6.6 V17" stroke="#7f7f7f" stroke-width="3"/></svg>
<div class="t" style="top:2033px;font-size:29.4px;color:#222;left:1222.7px;">8805 b.</div>
<div class="t" style="top:2033px;font-size:29.4px;color:#222;left:1445.3px;">10/17/2025 12:10 PM</div>
<svg style="position:absolute;left:1843.3px;top:2031px;" width="26.7" height="29.6" viewBox="0 0 26.7 29.6" preserveAspectRatio="none"><path d="M8.8 2.2 L10 0.4 Q10.4 0 11 0 H16.4 Q17 0 17.4 0.4 L18.6 2.2 Z" fill="#666"/><rect x="0.9" y="2" width="25.6" height="3.8" rx="1.6" fill="#666"/><path d="M2 7.6 H24.6 L23.2 26.6 Q23 29.6 20 29.6 H6.6 Q3.6 29.6 3.4 26.6 Z" fill="#666"/></svg>
<div class="t" style="top:1832px;font-size:32.4px;color:#48868e;left:1973.8px;">The last 10 events</div>
<svg style="position:absolute;left:2701.6px;top:1829.1px;" width="42.0" height="36.7" viewBox="0 0 42 37" preserveAspectRatio="none"><rect x="0" y="0" width="42" height="6" rx="2" fill="#aaa"/><rect x="0" y="15.5" width="42" height="6" rx="2" fill="#aaa"/><rect x="0" y="31" width="42" height="6" rx="2" fill="#aaa"/></svg>
<svg style="position:absolute;left:3156px;top:1824.5px;" width="46.7" height="46.5" viewBox="0 0 46 46" preserveAspectRatio="none"><circle cx="23" cy="23" r="23" fill="#0a1464"/><path d="M23 12.4 V33.6 M12.4 23 H33.6" stroke="#fff" stroke-width="6" stroke-linecap="round"/></svg>
<div style="position:absolute;left:1972px;top:1908px;width:1282px;height:260px;overflow:hidden;">
<div style="position:absolute;left:0px;top:0px;width:1400px;height:240px;border:2px solid #d0d0d0;border-radius:10px;box-sizing:border-box;background:#fff;"></div>
<div style="position:absolute;left:2px;top:2px;width:1396px;height:88px;background:#f0f0f0;border-radius:8px 8px 0 0;"></div>
<div style="position:absolute;left:2px;top:187px;width:1396px;height:2px;background:#ececec;"></div>
</div>
<div class="t" style="top:1940px;font-size:29.4px;color:#555564;left:1996.0px;">Ref.</div>
<svg style="position:absolute;left:2186px;top:1950px;" width="16.3" height="9" viewBox="0 0 16 9" preserveAspectRatio="none"><path d="M0 9 L8 0 L16 9 Z" fill="#555564"/></svg>
<div class="t" style="top:1940px;font-size:29.4px;color:#555564;left:2209.8px;">Date</div>
<div class="t" style="top:1940px;font-size:29.4px;color:#555564;left:2395.1px;">By</div>
<div class="t" style="top:1940px;font-size:29.4px;color:#555564;left:2640.9px;">Type</div>
<div class="t" style="top:1940px;font-size:29.4px;color:#555564;left:2885.0px;">Title</div>
<svg style="position:absolute;left:1998px;top:2031.1px;" width="25.8" height="29.4" viewBox="0 0 26 29.4" preserveAspectRatio="none"><rect x="5.4" y="0" width="3.4" height="5" rx="1" fill="#8a5e7c"/><rect x="16.8" y="0" width="3.4" height="5" rx="1" fill="#8a5e7c"/><path d="M0 6.4 Q0 3.9 2.5 3.9 H23.5 Q26 3.9 26 6.4 V9 H0 Z" fill="#8a5e7c"/><path d="M0 11.2 H26 V26.9 Q26 29.4 23.5 29.4 H2.5 Q0 29.4 0 26.9 Z" fill="#8a5e7c"/><rect x="3.70" y="14.90" width="4" height="4" rx="0.6" fill="#fff"/><rect x="3.70" y="22.10" width="4" height="4" rx="0.6" fill="#fff"/><rect x="10.95" y="14.90" width="4" height="4" rx="0.6" fill="#fff"/><rect x="10.95" y="22.10" width="4" height="4" rx="0.6" fill="#fff"/><rect x="18.20" y="14.90" width="4" height="4" rx="0.6" fill="#fff"/><rect x="18.20" y="22.10" width="4" height="4" rx="0.6" fill="#fff"/></svg>
<div class="t" style="top:2031px;font-size:29.4px;color:#0a1464;left:2030.1px;">205</div>
<div class="t" style="top:2031px;font-size:29.4px;color:#222;left:2104.0px;">10/17/25 12:10 PM</div>
<svg style="position:absolute;left:2401.6px;top:2028.2px;" width="34.0" height="40.1" viewBox="0 0 34 40" preserveAspectRatio="none"><defs><linearGradient id="usg" x1="0" y1="0" x2="0.3" y2="1"><stop offset="0" stop-color="#8a8a8a"/><stop offset="0.5" stop-color="#5a5a5a"/><stop offset="1" stop-color="#3c3c3c"/></linearGradient></defs><path d="M9.5 9 Q9.5 0.4 17 0.4 Q24.5 0.4 24.5 9 Q24.5 15 22 19 Q21 21 21.5 23.5 Q30 24.5 32.8 28 Q34 30 33.4 33 Q32.6 37.6 28 39 Q22 40 17 40 Q12 40 6 39 Q1.4 37.6 0.6 33 Q0 30 1.2 28 Q4 24.5 12.5 23.5 Q13 21 12 19 Q9.5 15 9.5 9 Z" fill="url(#usg)" stroke="#b0b0b0" stroke-width="0.7"/></svg>
<div class="t" style="top:2031px;font-size:29.4px;color:#0a1464;left:2444.0px;">SuperAd<span style="color:#222">…</span></div>
<svg style="position:absolute;left:2643px;top:2037px;" width="27" height="27" viewBox="0 0 27 27" preserveAspectRatio="none"><g fill="#9a9a9a"><path d="M10.6 0.4 H16.4 L17 6 H10 Z" transform="rotate(0 13.5 13.5)"/><path d="M10.6 0.4 H16.4 L17 6 H10 Z" transform="rotate(60 13.5 13.5)"/><path d="M10.6 0.4 H16.4 L17 6 H10 Z" transform="rotate(120 13.5 13.5)"/><path d="M10.6 0.4 H16.4 L17 6 H10 Z" transform="rotate(180 13.5 13.5)"/><path d="M10.6 0.4 H16.4 L17 6 H10 Z" transform="rotate(240 13.5 13.5)"/><path d="M10.6 0.4 H16.4 L17 6 H10 Z" transform="rotate(300 13.5 13.5)"/><circle cx="13.5" cy="13.5" r="9.6"/></g><circle cx="13.5" cy="13.5" r="4.2" fill="#fff"/></svg>
<div class="t" style="top:2031px;font-size:29.4px;color:#222;left:2688.7px;">Events in…</div>
<div style="position:absolute;left:2880px;top:2020px;width:373px;height:60px;overflow:hidden;">
<div class="t" style="top:11px;font-size:29.4px;color:#0a1464;left:3.3px;">Record SO2510-0011 modified</div>
</div>
<script>(function(){var w=window.innerWidth;if(w&&Math.abs(w-3360)>4){document.documentElement.style.zoom=(w/3360);}})();</script>
</body></html>
